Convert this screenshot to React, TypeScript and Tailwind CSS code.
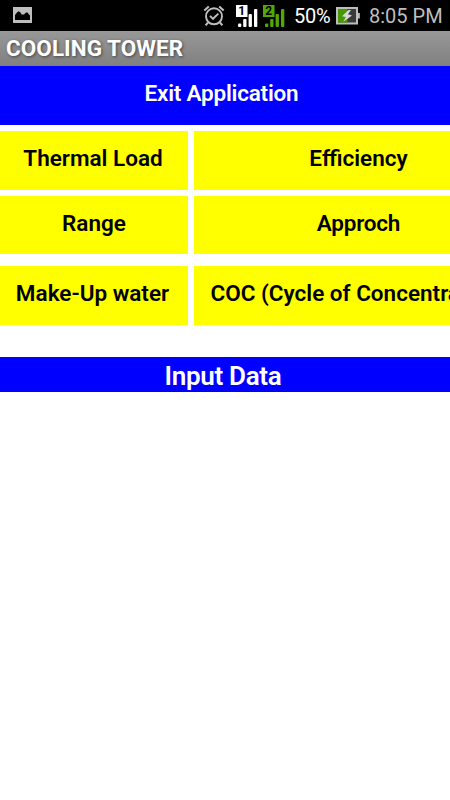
import React from 'react';

const PictureIcon = () => (
  <svg width="19" height="16" viewBox="0 0 19 16">
    <rect width="19" height="16" fill="#bebebe" />
    <path d="M2 13V8L4 5.5L5.5 4.3L7.5 5.5L8.5 7.5H11L13 5.5H14.5L16 7.5L17 8.5V13Z" fill="#000" />
  </svg>
);

const AlarmIcon = () => (
  <svg width="22" height="22" viewBox="0 0 22 22" fill="none" stroke="#bebebe" strokeWidth="1.9">
    <circle cx="11" cy="11.3" r="8" />
    <path d="M1.3 5.6L5.8 1.4M20.7 5.6L16.2 1.4" strokeWidth="2" />
    <path d="M5 17.5L2.6 20.4M17 17.5L19.4 20.4" strokeWidth="2" />
    <path d="M7 10.8L10 13.8L15.3 8.6" />
  </svg>
);

type SignalIconProps = { sim: string; color: string };

const SignalIcon = ({ sim, color }: SignalIconProps) => (
  <svg width="22" height="23" viewBox="0 0 22 23" fill={color}>
    <rect width="11.5" height="12" />
    <text
      x="5.7"
      y="10.3"
      textAnchor="middle"
      fill="#000"
      fontSize="12"
      fontWeight="700"
      fontFamily="Roboto, sans-serif"
    >
      {sim}
    </text>
    <rect x="2" y="18.5" width="3.3" height="3.5" rx="1" />
    <rect x="7.2" y="14" width="3.3" height="8" rx="1" />
    <rect x="12.6" y="9" width="3.3" height="13" rx="1" />
    <rect x="18" y="4" width="3.3" height="18" rx="1" />
  </svg>
);

const BatteryIcon = () => (
  <svg width="24" height="18" viewBox="0 0 24 18">
    <rect x="1" y="1" width="20" height="15.5" fill="#3a3a3a" stroke="#bebebe" strokeWidth="2" />
    <rect x="2" y="2" width="9.5" height="13.5" fill="#459a00" />
    <rect x="21.5" y="6" width="2.3" height="5.5" fill="#bebebe" />
    <path d="M12.5 3L6 9.3L9.8 10L7.3 14.7L16 8.5L12 7.3L15 3Z" fill="#d8d8d8" />
  </svg>
);

const StatusBar = () => (
  <div className="flex h-[31px] items-center bg-black pl-[13px] pr-2">
    <div className="pb-px">
      <PictureIcon />
    </div>
    <div className="ml-auto flex items-center">
      <AlarmIcon />
      <div className="ml-[11px] flex gap-[5px] pt-[2px]">
        <SignalIcon sim="1" color="#fff" />
        <SignalIcon sim="2" color="#50aa00" />
      </div>
      <span className="ml-[9px] w-[37px] whitespace-nowrap pt-px text-[20px] leading-[30px] tracking-[-0.3px] text-white">50%</span>
      <div className="ml-[5px]">
        <BatteryIcon />
      </div>
      <span className="ml-[9px] w-[73px] whitespace-nowrap pt-px text-[20px] leading-[30px] text-[#bebebe]">8:05 PM</span>
    </div>
  </div>
);

type ButtonProps = { label: string; className?: string };

const TowerButton = ({ label, className = '' }: ButtonProps) => (
  <button
    type="button"
    className={`flex shrink-0 items-center justify-center whitespace-nowrap bg-[#ffff00] text-[22.5px] font-semibold text-black ${className}`}
  >
    {label}
  </button>
);

const App: React.FC = () => {
  return (
    <div className="h-[800px] w-[450px] overflow-hidden bg-white font-['Roboto',sans-serif]">
      <StatusBar />

      <header className="flex h-[35px] items-center bg-linear-to-b from-[#989898] to-[#808080] pl-[6px]">
        <h1 className="text-[22.5px] font-bold tracking-[0.05px] text-white [text-shadow:1px_1px_3px_#444]">
          COOLING TOWER
        </h1>
      </header>

      <button
        type="button"
        className="flex h-[59px] w-full items-center justify-center bg-[#0000ff] pb-[3px] pr-[7px] text-[22.5px] font-semibold tracking-[-0.22px] text-white"
      >
        Exit Application
      </button>

      <div className="mt-[6px] grid grid-cols-[188px_329px] gap-x-[6px]">
        <TowerButton label="Thermal Load" className="h-[59px] pb-1 pr-[2px]" />
        <TowerButton label="Efficiency" className="h-[59px] pb-1" />
        <TowerButton label="Range" className="mt-[6px] h-[58px] pb-[2px]" />
        <TowerButton label="Approch" className="mt-[6px] h-[58px] pb-[2px] tracking-[-0.2px]" />
        <TowerButton label="Make-Up water" className="mt-3 h-[59px] pb-1 pr-[3px]" />
        <TowerButton label="COC (Cycle of Concentration)" className="mt-3 h-[59px] pb-1" />
      </div>

      <h2 className="mt-8 flex h-[35px] items-center justify-center bg-[#0000ff] pr-1 pt-[3px] text-[26px] font-semibold tracking-[-0.3px] text-white">
        Input Data
      </h2>
    </div>
  );
};

export default App;
